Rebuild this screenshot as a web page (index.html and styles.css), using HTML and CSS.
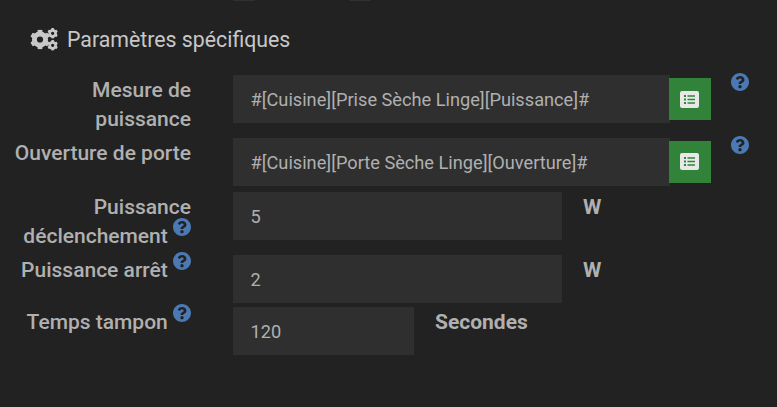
FILE: index.html
```
<!DOCTYPE html>
<html lang="fr">
<head>
<meta charset="utf-8">
<title>Paramètres spécifiques</title>
<link rel="stylesheet" href="styles.css">
</head>
<body>
<svg class="defs" aria-hidden="true">
  <symbol id="help" viewBox="8 8 496 496"><path d="M504 256c0 136.997-111.043 248-248 248S8 392.997 8 256C8 119.083 119.043 8 256 8s248 111.083 248 248zM262.655 90c-54.497 0-89.255 22.957-116.549 63.758-3.536 5.286-2.353 12.415 2.715 16.258l34.699 26.31c5.205 3.947 12.621 3.008 16.665-2.122 17.864-22.658 30.113-35.797 57.303-35.797 20.429 0 45.698 13.148 45.698 32.958 0 14.976-12.363 22.667-32.534 33.976C247.128 238.528 216 254.941 216 296v4c0 6.627 5.373 12 12 12h56c6.627 0 12-5.373 12-12v-1.333c0-28.462 83.186-29.647 83.186-106.667 0-58.002-60.165-102-116.531-102zM256 338c-25.365 0-46 20.635-46 46 0 25.364 20.635 46 46 46s46-20.636 46-46c0-25.364-20.635-46-46-46z"/></symbol>
  <symbol id="list" viewBox="0 0 19 17"><path fill-rule="evenodd" d="M2 0h15a2 2 0 0 1 2 2v13a2 2 0 0 1-2 2H2a2 2 0 0 1-2-2V2a2 2 0 0 1 2-2zM4 4v2h2V4zM7.5 4.3v1.4H15V4.3zM4 7.5v2h2v-2zM7.5 7.8v1.4H15V7.8zM4 11v2h2v-2zM7.5 11.3v1.4H15v-1.4z"/></symbol>
  <symbol id="gear" viewBox="-10 -10 20 20">
    <circle r="5.6" fill="none" stroke="currentColor" stroke-width="5"/>
    <g id="teeth"><rect x="-2.4" y="-9.8" width="4.8" height="4" rx=".8"/><rect x="-2.4" y="5.8" width="4.8" height="4" rx=".8"/></g>
    <use href="#teeth" transform="rotate(60)"/><use href="#teeth" transform="rotate(120)"/>
  </symbol>
</svg>
<div class="tabs"><i></i><i></i></div>
<main class="settings">
  <h1 class="title">
    <svg class="gears" viewBox="0 0 28 24"><use href="#gear" x="0" y="1.5" width="20" height="20"/><use href="#gear" x="17.3" y="0" width="10.7" height="10.7"/><use href="#gear" x="17.3" y="12" width="10.7" height="10.7"/></svg>
    <span>Paramètres spécifiques</span>
  </h1>
  <div class="row">
    <label class="label">Mesure de puissance</label>
    <div class="field wide">#[Cuisine][Prise Sèche Linge][Puissance]#</div>
    <button class="pick"><svg><use href="#list"/></svg></button>
    <svg class="help"><use href="#help"/></svg>
  </div>
  <div class="row compact">
    <label class="label">Ouverture de porte</label>
    <div class="field wide">#[Cuisine][Porte Sèche Linge][Ouverture]#</div>
    <button class="pick"><svg><use href="#list"/></svg></button>
    <svg class="help"><use href="#help"/></svg>
  </div>
  <div class="row">
    <label class="label">Puissance déclenchement <svg class="help"><use href="#help"/></svg></label>
    <div class="field medium">5</div>
    <span class="unit">W</span>
  </div>
  <div class="row short">
    <label class="label">Puissance arrêt <svg class="help"><use href="#help"/></svg></label>
    <div class="field medium">2</div>
    <span class="unit">W</span>
  </div>
  <div class="row">
    <label class="label">Temps tampon <svg class="help"><use href="#help"/></svg></label>
    <div class="field small">120</div>
    <span class="unit">Secondes</span>
  </div>
</main>
</body>
</html>
```
FILE: styles.css
```
* { box-sizing: border-box; }
body {
  margin: 0;
  height: 407px;
  overflow: hidden;
  background: #222;
  color: #b0b0b0;
  font-family: Roboto, sans-serif;
}
.defs { position: absolute; width: 0; height: 0; }
.tabs { display: flex; gap: 94px; height: 19px; padding-left: 233px; }
.tabs i { width: 22px; height: 1px; background: #303030; }
.title {
  display: flex;
  align-items: center;
  gap: 9px;
  height: 42px;
  margin: 0 0 14px;
  padding: 0 0 1px 30px;
  color: #c8c8c8;
  font-size: 21.3px;
  font-weight: 400;
}
.gears { width: 28px; height: 24px; fill: currentColor; }
.row { display: flex; align-items: flex-start; height: 63px; }
.row.compact { height: 54px; }
.row.short { height: 52px; }
.label {
  flex: none;
  width: 191px;
  margin-right: 42px;
  padding: 1px 0 0 10px;
  text-align: right;
  font-size: 21px;
  font-weight: 500;
  line-height: 29px;
}
.help { flex: none; width: 18px; height: 18px; fill: #4b79b4; }
.row > .help { margin: -2px 0 0 20px; }
.label .help { margin-bottom: -1px; vertical-align: 0; position: relative; top: -8px; }
.field {
  flex: none;
  height: 48px;
  padding-left: 17.5px;
  background: #2f2f2f;
  font-size: 18.2px;
  line-height: 49px;
  white-space: nowrap;
}
.wide { width: 437px; }
.medium { width: 329px; }
.small { width: 181px; }
.pick {
  display: grid;
  place-items: center;
  width: 42px;
  height: 42px;
  margin: 3px 0 0 -1px;
  padding: 1px 2px 0 0;
  border: 0;
  background: #32833a;
}
.compact .pick { padding: 0 2px 2px 0; }
.pick svg { width: 19px; height: 17px; fill: #e8e8e8; }
.unit { margin-left: 21px; padding-top: 1px; font-size: 21px; font-weight: 700; line-height: 29px; }
```
